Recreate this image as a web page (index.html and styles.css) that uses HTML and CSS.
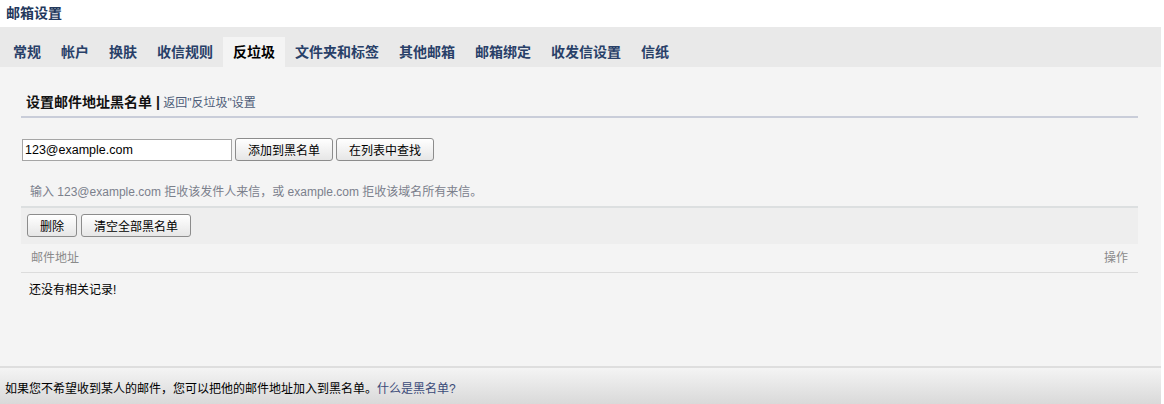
FILE: index.html
```html
<!DOCTYPE html>
<html lang="zh-CN">
<head>
    <meta charset="UTF-8">
    <meta name="viewport" content="width=device-width, initial-scale=1.0">
    <title>邮箱设置</title>
    <link rel="stylesheet" href="styles.css">
</head>
<body>
    <div class="page">
        <header class="page-title">邮箱设置</header>

        <nav class="tabs">
            <a class="tab">常规</a>
            <a class="tab">帐户</a>
            <a class="tab">换肤</a>
            <a class="tab">收信规则</a>
            <a class="tab active">反垃圾</a>
            <a class="tab">文件夹和标签</a>
            <a class="tab">其他邮箱</a>
            <a class="tab">邮箱绑定</a>
            <a class="tab">收发信设置</a>
            <a class="tab">信纸</a>
        </nav>

        <main class="content">
            <div class="section-title">
                <strong>设置邮件地址黑名单 |</strong>
                <a class="back-link">返回"反垃圾"设置</a>
            </div>

            <!-- 添加地址 -->
            <form class="add-row">
                <input type="text" class="addr-input" value="123@example.com">
                <button type="button" class="btn">添加到黑名单</button>
                <button type="button" class="btn">在列表中查找</button>
            </form>

            <p class="hint">输入 123@example.com 拒收该发件人来信，或 example.com 拒收该域名所有来信。</p>

            <div class="toolbar">
                <button type="button" class="btn">删除</button>
                <button type="button" class="btn">清空全部黑名单</button>
            </div>

            <div class="list-head">
                <span>邮件地址</span>
                <span>操作</span>
            </div>
            <div class="list-empty">还没有相关记录!</div>
        </main>

        <footer class="tip">
            如果您不希望收到某人的邮件，您可以把他的邮件地址加入到黑名单。<a class="tip-link">什么是黑名单?</a>
        </footer>
    </div>
</body>
</html>
```

FILE: styles.css
```css
body {
    margin: 0;
    font-family: Arial, "Liberation Sans", "Noto Sans CJK SC", sans-serif;
    font-size: 12px;
    color: #000;
    background: #fff;
}

.page {
    width: 1161px;
    height: 100vh;
    display: flex;
    flex-direction: column;
}

.page-title {
    height: 27px;
    line-height: 27px;
    padding-left: 6px;
    font-size: 14px;
    font-weight: bold;
    color: #23385c;
}

.tabs {
    display: flex;
    height: 40px;
    padding: 10px 0 0 3px;
    box-sizing: border-box;
    background: #e9e9e9;
}

.tab {
    padding: 0 10px;
    line-height: 30px;
    font-size: 14px;
    font-weight: bold;
    color: #284068;
    cursor: pointer;
}

.tab.active {
    background: #f4f4f4;
    color: #000;
}

.content {
    flex: 1;
    background: #f4f4f4;
    padding: 0 23px 0 21px;
}

.section-title {
    padding: 26px 5px 4px;
    line-height: 18px;
    border-bottom: 2px solid #c9cdd9;
}

.section-title strong {
    font-size: 14px;
    color: #111;
}

.back-link {
    color: #4d5c78;
    cursor: pointer;
}

.add-row {
    display: flex;
    align-items: center;
    gap: 3px;
    margin: 20px 0 0 1px;
}

.addr-input {
    width: 210px;
    height: 22px;
    box-sizing: border-box;
    padding: 0 2px;
    border: 1px solid #a5a5a5;
    font-family: Arial, "Liberation Sans", sans-serif;
    font-size: 12.5px;
    color: #000;
    background: #fff;
}

.btn {
    height: 23px;
    padding: 0 12px;
    border: 1px solid #8c8c8c;
    border-radius: 3px;
    background: linear-gradient(#ffffff, #e6e6e6);
    font-family: Arial, "Liberation Sans", "Noto Sans CJK SC", sans-serif;
    font-size: 12px;
    color: #000;
    cursor: pointer;
}

.hint {
    margin: 23px 0 6px;
    padding-left: 9px;
    line-height: 16px;
    color: #7b808c;
}

.toolbar {
    display: flex;
    gap: 4px;
    padding: 6px 6px 7px;
    border-top: 2px solid #dcdfe0;
    background: #eeeeee;
}

.list-head {
    display: flex;
    justify-content: space-between;
    padding: 0 10px;
    line-height: 28px;
    color: #8a8a8a;
    border-bottom: 1px solid #dcdcdc;
}

.list-empty {
    padding-left: 8px;
    line-height: 34px;
}

.tip {
    height: 38px;
    box-sizing: border-box;
    padding: 11px 5px 0;
    line-height: 20px;
    border-top: 2px solid #dedede;
    background: linear-gradient(#f4f4f4, #d9d9d9);
}

.tip-link {
    color: #3a4a78;
    cursor: pointer;
}
```
